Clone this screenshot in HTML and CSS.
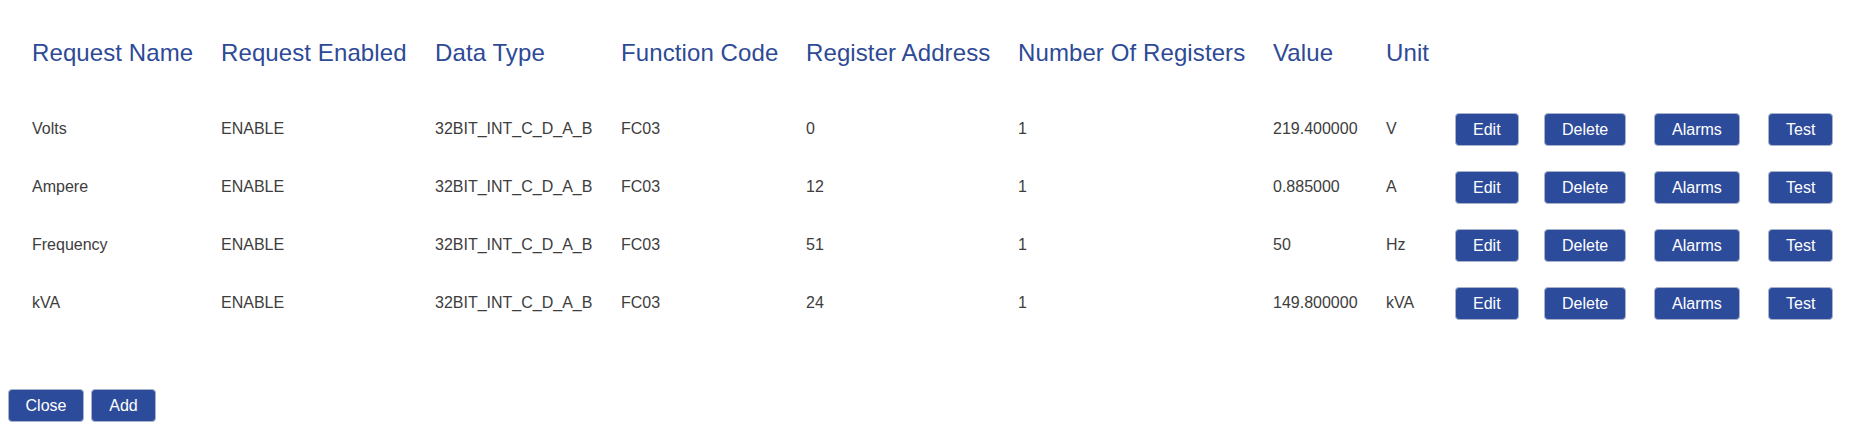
FILE: index.html
```html
<!DOCTYPE html>
<html lang="en">
<head>
<meta charset="utf-8">
<title>Requests</title>
<link rel="stylesheet" href="styles.css">
</head>
<body>
<div class="wrap">
  <table class="req-table">
    <colgroup>
      <col class="c-name"><col class="c-enabled"><col class="c-type"><col class="c-func">
      <col class="c-addr"><col class="c-num"><col class="c-value"><col class="c-unit">
      <col class="c-edit"><col class="c-delete"><col class="c-alarms"><col class="c-test">
    </colgroup>
    <thead>
      <tr>
        <th>Request Name</th>
        <th>Request Enabled</th>
        <th>Data Type</th>
        <th>Function Code</th>
        <th>Register Address</th>
        <th>Number Of Registers</th>
        <th>Value</th>
        <th>Unit</th>
        <th></th><th></th><th></th><th></th>
      </tr>
    </thead>
    <tbody>
      <tr>
        <td>Volts</td><td>ENABLE</td><td>32BIT_INT_C_D_A_B</td><td>FC03</td><td>0</td><td>1</td><td>219.400000</td><td>V</td>
        <td><button class="btn">Edit</button></td><td><button class="btn">Delete</button></td><td><button class="btn">Alarms</button></td><td><button class="btn">Test</button></td>
      </tr>
      <tr>
        <td>Ampere</td><td>ENABLE</td><td>32BIT_INT_C_D_A_B</td><td>FC03</td><td>12</td><td>1</td><td>0.885000</td><td>A</td>
        <td><button class="btn">Edit</button></td><td><button class="btn">Delete</button></td><td><button class="btn">Alarms</button></td><td><button class="btn">Test</button></td>
      </tr>
      <tr>
        <td>Frequency</td><td>ENABLE</td><td>32BIT_INT_C_D_A_B</td><td>FC03</td><td>51</td><td>1</td><td>50</td><td>Hz</td>
        <td><button class="btn">Edit</button></td><td><button class="btn">Delete</button></td><td><button class="btn">Alarms</button></td><td><button class="btn">Test</button></td>
      </tr>
      <tr>
        <td>kVA</td><td>ENABLE</td><td>32BIT_INT_C_D_A_B</td><td>FC03</td><td>24</td><td>1</td><td>149.800000</td><td>kVA</td>
        <td><button class="btn">Edit</button></td><td><button class="btn">Delete</button></td><td><button class="btn">Alarms</button></td><td><button class="btn">Test</button></td>
      </tr>
    </tbody>
  </table>
</div>
<div class="footer">
  <button class="btn btn-close">Close</button>
  <button class="btn btn-add">Add</button>
</div>
</body>
</html>
```

FILE: styles.css
```css
html, body {
  background: #ffffff;
}
body {
  margin: 8px;
  font-family: "Liberation Sans", Arial, Helvetica, sans-serif;
  color: #333333;
}
.wrap {
  padding-left: 24px;
}
.req-table {
  table-layout: fixed;
  border-collapse: collapse;
  width: 1800px;
}
.c-name { width: 189px; }
.c-enabled { width: 214px; }
.c-type { width: 186px; }
.c-func { width: 185px; }
.c-addr { width: 212px; }
.c-num { width: 255px; }
.c-value { width: 113px; }
.c-unit { width: 69px; }
.c-edit { width: 89px; }
.c-delete { width: 110px; }
.c-alarms { width: 114px; }
.c-test { width: 64px; }

.req-table th {
  text-align: left;
  font-weight: normal;
  font-size: 24px;
  line-height: 28px;
  color: #2e4a96;
  padding: 31px 0 33px 0;
  white-space: nowrap;
  letter-spacing: 0.1px;
}
.req-table td {
  height: 58px;
  padding: 0;
  font-size: 16px;
  vertical-align: middle;
  white-space: nowrap;
  color: #3d3d3d;
}
.btn {
  font-family: "Liberation Sans", Arial, Helvetica, sans-serif;
  font-size: 16px;
  color: #ffffff;
  background: #2c4b9b;
  border: 1px solid #a9b3cc;
  border-radius: 4px;
  height: 33px;
  padding: 0 17px;
  line-height: 31px;
  cursor: pointer;
  margin: 0;
}
.req-table .btn {
  display: block;
}
.footer {
  display: flex;
  gap: 7px;
  margin-top: 57px;
}
.btn-close { width: 76px; padding: 0; }
.btn-add { width: 65px; padding: 0; }
```
